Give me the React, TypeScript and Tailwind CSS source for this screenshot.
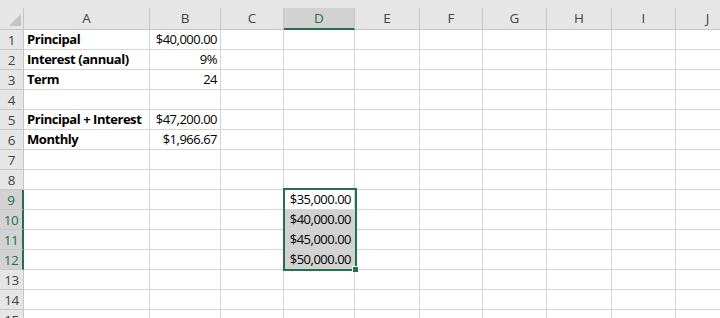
import React from 'react';

// column widths in px, row-number column first
const cols = [
  { key: '', w: 24 },
  { key: 'A', w: 126 },
  { key: 'B', w: 71 },
  { key: 'C', w: 63 },
  { key: 'D', w: 71 },
  { key: 'E', w: 65 },
  { key: 'F', w: 63 },
  { key: 'G', w: 64 },
  { key: 'H', w: 65 },
  { key: 'I', w: 64 },
  { key: 'J', w: 64 },
];

type Row = { a?: string; b?: string; d?: string };

const data: Record<number, Row> = {
  1: { a: 'Principal', b: '$40,000.00' },
  2: { a: 'Interest (annual)', b: '9%' },
  3: { a: 'Term', b: '24' },
  5: { a: 'Principal + Interest', b: '$47,200.00' },
  6: { a: 'Monthly', b: '$1,966.67' },
  9: { d: '$35,000.00' },
  10: { d: '$40,000.00' },
  11: { d: '$45,000.00' },
  12: { d: '$50,000.00' },
};

const rows = Array.from({ length: 15 }, (_, i) => i + 1);
const selRows = [9, 10, 11, 12];

const App = () => {
  return (
    <div
      className="relative w-[720px] h-[318px] overflow-hidden bg-white text-black"
      style={{ fontFamily: '"Open Sans", "Noto Sans", sans-serif' }}
    >
      {/* Encabezado de columnas */}
      <div className="flex h-[30px] bg-[#e6e6e6] border-b border-[#c6c6c6]">
        {cols.map((c, i) => {
          const sel = c.key === 'D';
          return (
            <div key={i} className="shrink-0 flex flex-col" style={{ width: c.w }}>
              <div className="h-[8px]" />
              <div
                className={`relative flex-1 flex items-center justify-center text-[13.5px] border-r border-[#c6c6c6] ${
                  sel ? 'bg-[#d2d2d2] text-[#217346] border-b-2 border-b-[#217346] -mb-px' : 'text-[#444]'
                }`}
              >
                {i === 0 ? (
                  <svg width="24" height="21" className="absolute left-0 top-0" viewBox="0 0 24 21">
                    <polygon points="9,18 21,18 21,6" fill="#c4c4c4" />
                  </svg>
                ) : (
                  c.key
                )}
              </div>
            </div>
          );
        })}
      </div>

      {/* Filas */}
      {rows.map((r) => {
        const row = data[r] || {};
        const sel = selRows.includes(r);
        return (
          <div key={r} className="flex h-[20px]">
            <div
              className={`w-[24px] shrink-0 flex items-center justify-center pt-px text-[13.5px] tracking-[-0.4px] border-b border-[#c6c6c6] ${
                sel
                  ? 'bg-[#d2d2d2] text-[#217346] border-r-2 border-r-[#217346]'
                  : 'bg-[#e6e6e6] text-[#444] border-r border-r-[#c6c6c6]'
              }`}
            >
              {r}
            </div>
            <div className="w-[126px] shrink-0 border-r border-b border-[#d4d4d4] pl-[3px] pt-px flex items-center text-[13px] tracking-[-0.45px] font-bold whitespace-nowrap">
              {row.a}
            </div>
            <div className="w-[71px] shrink-0 border-r border-b border-[#d4d4d4] pr-[3px] pt-px flex items-center justify-end text-[13px] tracking-[-0.5px] whitespace-nowrap">
              {row.b}
            </div>
            <div className="w-[63px] shrink-0 border-r border-b border-[#d4d4d4]" />
            <div
              className={`w-[71px] shrink-0 border-r border-b border-[#d4d4d4] pr-[3px] pt-px flex items-center justify-end text-[13px] tracking-[-0.5px] whitespace-nowrap ${
                sel && r !== 9 ? 'bg-[#d2d2d2]' : ''
              }`}
            >
              {row.d}
            </div>
            {[65, 63, 64, 65, 64, 64].map((w, i) => (
              <div key={i} className="shrink-0 border-r border-b border-[#d4d4d4]" style={{ width: w }} />
            ))}
          </div>
        );
      })}

      {/* Selección D9:D12 */}
      <div className="absolute left-[283px] top-[188px] w-[74px] h-[83px] border-2 border-[#217346] pointer-events-none" />
      <div className="absolute left-[352px] top-[266px] w-[7px] h-[7px] bg-[#217346] border border-white" />
    </div>
  );
};

export default App;
